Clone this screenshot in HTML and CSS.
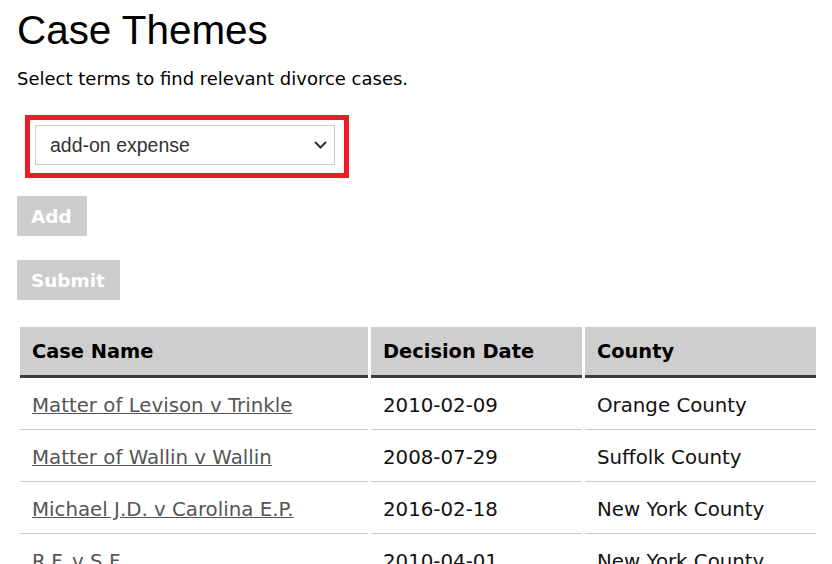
FILE: index.html
```html
<!DOCTYPE html>
<html lang="en">
<head>
<meta charset="utf-8">
<title>Case Themes</title>
<link rel="stylesheet" href="styles.css">
</head>
<body>
<main class="page">
  <h1 class="title">Case Themes</h1>
  <p class="intro">Select terms to find relevant divorce cases.</p>
  <div class="picker">
    <div class="select-box">
      <span class="select-value">add-on expense</span>
      <svg class="chevron" width="13" height="8" viewBox="0 0 13 8"><polyline points="1,1 6.5,6.5 12,1" fill="none" stroke="#333" stroke-width="2"/></svg>
    </div>
  </div>
  <div class="actions">
    <button class="btn" disabled>Add</button>
    <button class="btn btn-submit" disabled>Submit</button>
  </div>
  <table class="cases">
    <thead>
      <tr><th class="c-name">Case Name</th><th class="c-date">Decision Date</th><th class="c-county">County</th></tr>
    </thead>
    <tbody>
      <tr><td><a href="#">Matter of Levison v Trinkle</a></td><td>2010-02-09</td><td>Orange County</td></tr>
      <tr><td><a href="#">Matter of Wallin v Wallin</a></td><td>2008-07-29</td><td>Suffolk County</td></tr>
      <tr><td><a href="#">Michael J.D. v Carolina E.P.</a></td><td>2016-02-18</td><td>New York County</td></tr>
      <tr><td><a href="#">R.F. v S.F.</a></td><td>2010-04-01</td><td>New York County</td></tr>
    </tbody>
  </table>
</main>
</body>
</html>
```
FILE: styles.css
```css
html, body { margin: 0; padding: 0; background: #fff; }
.page { padding: 8px 13px 0 17px; font-family: "DejaVu Sans", Verdana, sans-serif; color: #000; }
.title { margin: 0; font-family: "Liberation Sans", Arial, sans-serif; font-weight: normal; font-size: 40.4px; line-height: 45px; }
.intro { margin: 15px 0 0; font-size: 18px; line-height: 21px; }
.picker { display: inline-block; margin: 26px 0 0 8px; border: 5px solid #ed1c24; padding: 5px 9px 8px 5px; }
.select-box { box-sizing: border-box; width: 300px; height: 40px; border: 1px solid #ccc; display: flex; align-items: center; justify-content: space-between; padding: 0 7px 0 14px; font-family: "Liberation Sans", Arial, sans-serif; font-size: 19.5px; color: #333; }
.chevron { display: block; }
.actions { display: flex; flex-direction: column; align-items: flex-start; gap: 24px; margin-top: 18px; }
.btn { height: 40px; padding: 0 15px 0 14px; border: 0; background: #ccc; color: #fff; font-family: "DejaVu Sans", Verdana, sans-serif; font-weight: bold; font-size: 18.4px; }
.cases { margin-top: 24px; width: 802px; table-layout: fixed; border-collapse: separate; border-spacing: 3px; font-size: 19.8px; }
.cases th, .cases td { box-sizing: border-box; text-align: left; padding: 13px 12px 11px; line-height: 24px; }
.cases th { background: #cecece; border-bottom: 3px solid #3c3c3c; font-weight: bold; font-size: 19.4px; }
.cases td { border-bottom: 1px solid #ccc; color: #111; }
.c-name { width: 348px; }
.c-date { width: 211px; }
.c-county { width: 231px; }
.cases a { color: #555; text-decoration: underline; }
```
